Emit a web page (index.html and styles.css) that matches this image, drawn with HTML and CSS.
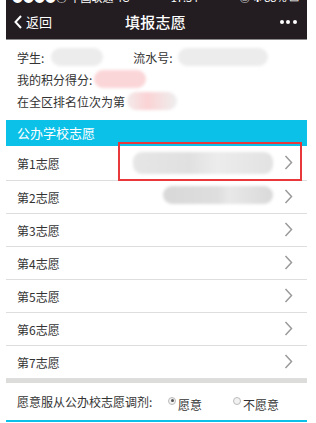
FILE: index.html
```html
<!DOCTYPE html>
<html lang="zh-CN">
<head>
<meta charset="utf-8">
<title>填报志愿</title>
<link rel="stylesheet" href="styles.css">
</head>
<body>
<div class="page">
  <div class="status">
    <div class="status-in">
      <span>●●●●○ 中国联通 4G</span>
      <span>17:34</span>
      <span>◎ ✱ 88% ▭</span>
    </div>
  </div>
  <header class="nav">
    <div class="nav-back">
      <svg class="back-ico" width="8" height="14" viewBox="0 0 8 14"><path d="M7 1 L1.5 7 L7 13" fill="none" stroke="#fff" stroke-width="2"/></svg>
      <span>返回</span>
    </div>
    <div class="nav-title">填报志愿</div>
    <div class="nav-more"><i></i><i></i><i></i></div>
  </header>
  <section class="info">
    <div class="info-row">
      <span>学生:</span><span class="blob blob-name"></span>
      <span class="lbl-serial">流水号:</span><span class="blob blob-serial"></span>
    </div>
    <div class="info-row">
      <span>我的积分得分:</span><span class="blob blob-pink blob-score"></span>
    </div>
    <div class="info-row">
      <span>在全区排名位次为第</span><span class="blob blob-pink blob-rank"></span>
    </div>
  </section>
  <div class="section-title">公办学校志愿</div>
  <ul class="choices">
    <li class="choice choice-first"><span class="choice-name">第1志愿</span><span class="blob blob-school1"></span><svg class="chev" width="9" height="15" viewBox="0 0 9 15"><path d="M1.5 1 L7.5 7.5 L1.5 14" fill="none" stroke="#9a9a9a" stroke-width="1.5"/></svg></li>
    <li class="choice"><span class="choice-name">第2志愿</span><span class="blob blob-school2"></span><svg class="chev" width="9" height="15" viewBox="0 0 9 15"><path d="M1.5 1 L7.5 7.5 L1.5 14" fill="none" stroke="#9a9a9a" stroke-width="1.5"/></svg></li>
    <li class="choice"><span class="choice-name">第3志愿</span><svg class="chev" width="9" height="15" viewBox="0 0 9 15"><path d="M1.5 1 L7.5 7.5 L1.5 14" fill="none" stroke="#9a9a9a" stroke-width="1.5"/></svg></li>
    <li class="choice"><span class="choice-name">第4志愿</span><svg class="chev" width="9" height="15" viewBox="0 0 9 15"><path d="M1.5 1 L7.5 7.5 L1.5 14" fill="none" stroke="#9a9a9a" stroke-width="1.5"/></svg></li>
    <li class="choice"><span class="choice-name">第5志愿</span><svg class="chev" width="9" height="15" viewBox="0 0 9 15"><path d="M1.5 1 L7.5 7.5 L1.5 14" fill="none" stroke="#9a9a9a" stroke-width="1.5"/></svg></li>
    <li class="choice"><span class="choice-name">第6志愿</span><svg class="chev" width="9" height="15" viewBox="0 0 9 15"><path d="M1.5 1 L7.5 7.5 L1.5 14" fill="none" stroke="#9a9a9a" stroke-width="1.5"/></svg></li>
    <li class="choice"><span class="choice-name">第7志愿</span><svg class="chev" width="9" height="15" viewBox="0 0 9 15"><path d="M1.5 1 L7.5 7.5 L1.5 14" fill="none" stroke="#9a9a9a" stroke-width="1.5"/></svg></li>
  </ul>
  <div class="thick-sep"></div>
  <div class="adjust">
    <span class="adjust-lbl">愿意服从公办校志愿调剂:</span>
    <label class="radio"><span class="radio-dot checked"></span><span>愿意</span></label>
    <label class="radio"><span class="radio-dot"></span><span>不愿意</span></label>
  </div>
  <div class="bottom-line"></div>
  <div class="highlight"></div>
</div>
</body>
</html>
```

FILE: styles.css
```css
* { box-sizing: border-box; }
html, body { margin: 0; padding: 0; background: #fff; }
body {
  font-family: "Noto Sans CJK SC", "Noto Sans", "Liberation Sans", sans-serif;
  font-size: 12px;
  color: #222;
}
.page {
  position: relative;
  width: 301px;
  margin-left: 6px;
  background: #fff;
}
.status {
  height: 4px;
  overflow: hidden;
  background: #231d21;
}
.status-in {
  margin-top: -10px;
  height: 14px;
  line-height: 14px;
  display: flex;
  justify-content: space-between;
  padding: 0 8px 0 6px;
  color: #fff;
  font-size: 11px;
}
.nav {
  height: 36px;
  background: #231d21;
  border-bottom: 1px solid #8a8a8a;
  display: flex;
  align-items: center;
  justify-content: space-between;
  padding: 0 10px 0 8px;
  color: #fff;
}
.nav-back {
  display: flex;
  align-items: center;
  gap: 4px;
  font-size: 13px;
  width: 60px;
}
.nav-title {
  font-size: 15px;
  font-weight: 500;
  letter-spacing: 0.3px;
}
.nav-more {
  width: 60px;
  display: flex;
  justify-content: flex-end;
  gap: 2.5px;
}
.nav-more i {
  width: 4px;
  height: 4px;
  border-radius: 50%;
  background: #fff;
}
.info {
  padding: 6px 0 6px 11px;
  height: 80px;
}
.info-row {
  display: flex;
  align-items: center;
  height: 22px;
  color: #333;
}
.lbl-serial { margin-left: 30px; }
.blob {
  display: inline-block;
  height: 18px;
  border-radius: 9px;
  background: #e6e6e6;
  filter: blur(1.5px);
}
.blob-name { width: 52px; margin-left: 7px; background: #ececec; }
.blob-serial { width: 90px; margin-left: 5px; background: #ececec; }
.blob-pink { background: #fbd6d8; }
.blob-score { width: 52px; margin-left: 2px; }
.blob-rank { width: 50px; margin-left: 2px; background: linear-gradient(90deg, #f3eaea, #fbd3d5 40%, #eee 100%); }
.section-title {
  height: 26px;
  background: #0bc1e8;
  color: #fff;
  font-size: 13px;
  line-height: 26px;
  padding-left: 11px;
}
.choices {
  list-style: none;
  margin: 0;
  padding: 0;
}
.choice {
  height: 33px;
  border-bottom: 1px solid #dedede;
  display: flex;
  align-items: center;
  padding: 0 14px 0 11px;
  color: #333;
}
.choice-first { height: 35px; }
.choice-name { flex: 1; }
.chev { margin-top: -2px; }
.blob-school1 {
  width: 140px;
  height: 22px;
  margin-right: 11px;
  background: linear-gradient(90deg, #e6e6e6, #e0e0e0 40%, #ececec 60%, #e2e2e2);
}
.blob-school2 {
  width: 110px;
  height: 18px;
  margin-right: 11px;
  margin-top: -4px;
  background: linear-gradient(90deg, #d8d8d8, #dedede 50%, #e8e8e8 60%, #d9d9d9);
}
.thick-sep {
  height: 4px;
  background: #dcdcda;
}
.adjust {
  height: 37px;
  display: flex;
  align-items: center;
  padding-left: 11px;
  color: #333;
}
.adjust-lbl { width: 151px; }
.radio {
  display: flex;
  align-items: center;
  gap: 2px;
  margin-top: 6px;
}
.radio + .radio { margin-left: 31px; }
.radio-dot {
  width: 8px;
  height: 8px;
  border-radius: 50%;
  border: 1px solid #bbb;
  background: #f2f2f2;
  margin-top: -8px;
  position: relative;
}
.radio-dot.checked::after {
  content: "";
  position: absolute;
  left: 1.5px;
  top: 1.5px;
  width: 3px;
  height: 3px;
  border-radius: 50%;
  background: #555;
}
.bottom-line {
  height: 2px;
  background: #0bc1e8;
}
.highlight {
  position: absolute;
  left: 112px;
  top: 142px;
  width: 184px;
  height: 39px;
  border: 2px solid #e8383b;
}
```
